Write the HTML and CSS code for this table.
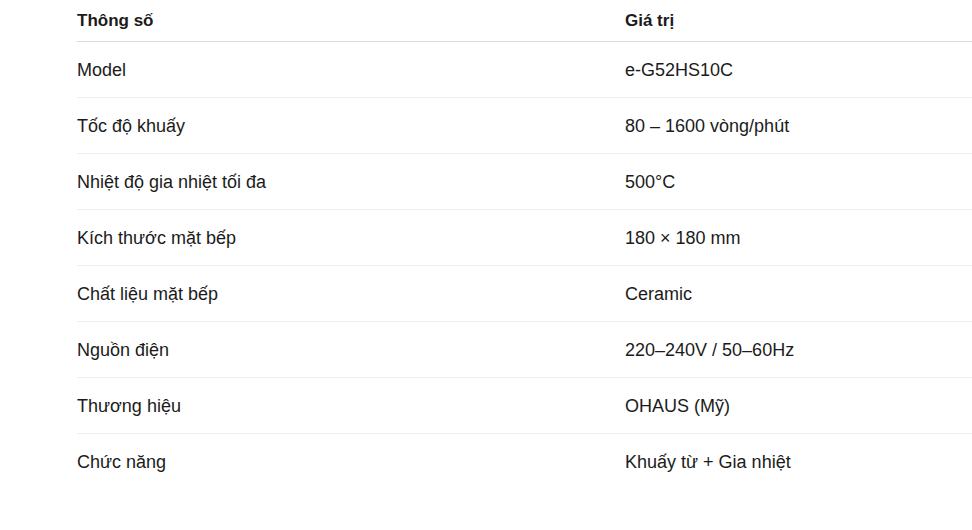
FILE: index.html
```html
<!DOCTYPE html>
<html lang="vi">
<head>
<meta charset="utf-8">
<title>Thông số kỹ thuật</title>
<link rel="stylesheet" href="styles.css">
</head>
<body>
<div class="spec">
  <div class="row head">
    <div class="cell">Thông số</div>
    <div class="cell">Giá trị</div>
  </div>
  <div class="row">
    <div class="cell">Model</div>
    <div class="cell">e-G52HS10C</div>
  </div>
  <div class="row">
    <div class="cell">Tốc độ khuấy</div>
    <div class="cell">80 – 1600 vòng/phút</div>
  </div>
  <div class="row">
    <div class="cell">Nhiệt độ gia nhiệt tối đa</div>
    <div class="cell">500°C</div>
  </div>
  <div class="row">
    <div class="cell">Kích thước mặt bếp</div>
    <div class="cell">180 × 180 mm</div>
  </div>
  <div class="row">
    <div class="cell">Chất liệu mặt bếp</div>
    <div class="cell">Ceramic</div>
  </div>
  <div class="row">
    <div class="cell">Nguồn điện</div>
    <div class="cell">220–240V / 50–60Hz</div>
  </div>
  <div class="row">
    <div class="cell">Thương hiệu</div>
    <div class="cell">OHAUS (Mỹ)</div>
  </div>
  <div class="row last">
    <div class="cell">Chức năng</div>
    <div class="cell">Khuấy từ + Gia nhiệt</div>
  </div>
</div>
</body>
</html>
```

FILE: styles.css
```css
html, body {
  margin: 0;
  padding: 0;
  background: #ffffff;
}
body {
  font-family: "Liberation Sans", Arial, sans-serif;
  font-size: 18px;
  line-height: 24px;
  color: #1b1b1b;
}
.spec {
  margin-left: 77px;
  display: flex;
  flex-direction: column;
}
.row {
  display: grid;
  grid-template-columns: 548px 1fr;
  padding: 16px 0 15px;
  border-bottom: 1px solid #eeeeee;
}
.row.head {
  padding: 9px 0 8px;
  font-weight: 700;
  font-size: 17px;
  border-bottom-color: #d9d9d9;
}
.row.last {
  border-bottom: none;
}
```
